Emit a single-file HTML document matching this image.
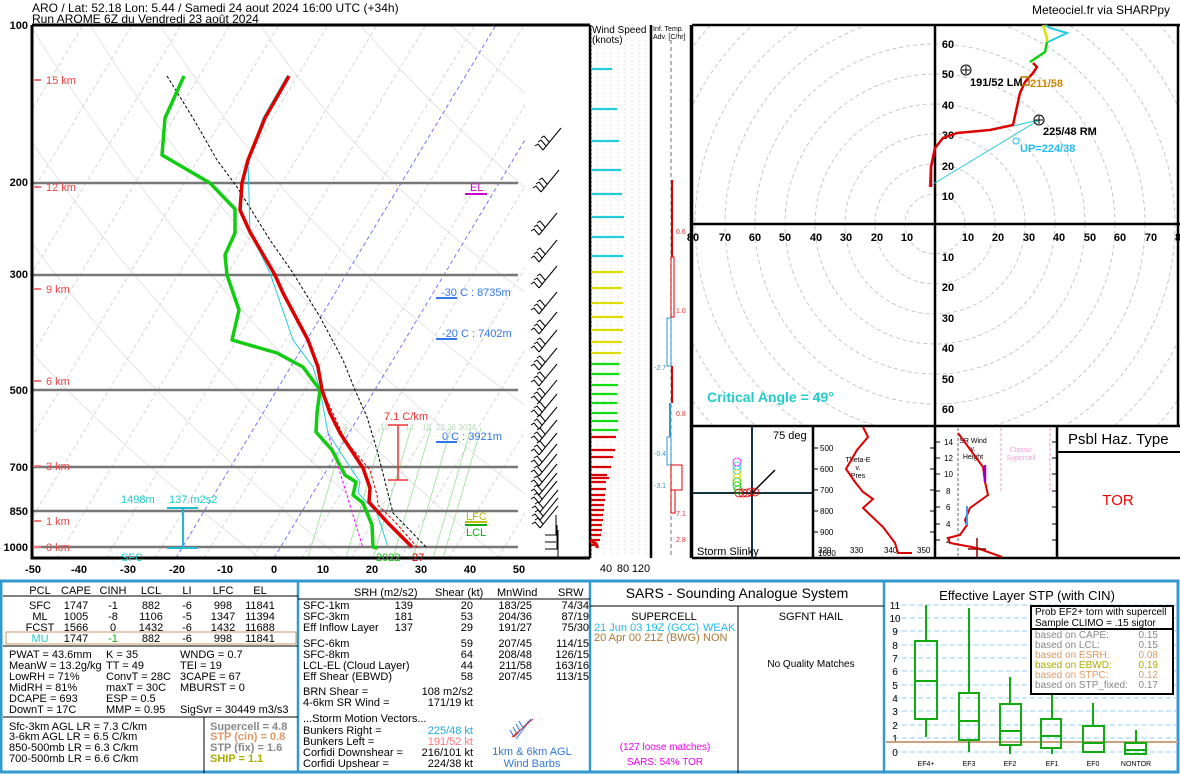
<!DOCTYPE html>
<html><head><meta charset="utf-8"><style>
html,body{margin:0;padding:0;background:#fff;width:1180px;height:774px;overflow:hidden}
svg{display:block;font-family:"Liberation Sans",sans-serif}
</style></head><body>
<svg width="1180" height="774" viewBox="0 0 1180 774" xmlns="http://www.w3.org/2000/svg">
<defs>
<clipPath id="sk"><rect x="33" y="26" width="556" height="531"/></clipPath>
<clipPath id="sk2"><rect x="33" y="26" width="492" height="531"/></clipPath>
<clipPath id="hd"><rect x="693" y="26" width="487" height="399"/></clipPath>
<g id="barb" fill="none" stroke="#000" stroke-width="1"><path d="M0,0 L18,-22 M0,0 L-5,-6 L-8,-4 M3,-4 L-2,-10 L-5,-8 M6,-8 L1,-14 L-2,-12"/></g>
<g id="barb2" fill="none" stroke="#000" stroke-width="1"><path d="M0,0 L18,-22 M0,0 L-5,-6 L-8,-4 M3,-4 L-2,-10 L-5,-8"/></g>
</defs>
<rect width="1180" height="774" fill="#fff"/>
<text x="32" y="12" font-size="12">ARO / Lat: 52.18 Lon: 5.44 / Samedi 24 aout 2024 16:00 UTC (+34h)</text>
<text x="32" y="23" font-size="12">Run AROME 6Z du Vendredi 23 août 2024</text>
<text x="1170" y="14" font-size="12" text-anchor="end">Meteociel.fr via SHARPpy</text>

<g clip-path="url(#sk2)">
 <g stroke="#ccc" stroke-width="0.8" stroke-dasharray="4,3">
  <path d="M-90,558 l320,-533 M-41,558 l320,-533 M8,558 l320,-533 M57,558 l320,-533 M106,558 l320,-533 M155,558 l320,-533 M204,558 l320,-533 M253,558 l320,-533 M302,558 l320,-533 M351,558 l320,-533 M400,558 l320,-533 M449,558 l320,-533 M498,558 l320,-533 M-139,558 l320,-533 M-188,558 l320,-533 M-237,558 l320,-533 M-286,558 l320,-533"/>
 </g>
 <g stroke="#ddd" stroke-width="0.8" fill="none">
  <path d="M560,430 Q300,250 160,25 M560,520 Q260,300 90,25 M500,558 Q220,330 30,25 M420,558 Q150,330 -10,80 M340,558 Q100,360 -10,180 M260,558 Q60,400 -10,300 M580,330 Q380,200 260,25 M590,240 Q460,140 360,25 M590,150 Q520,90 450,25"/>
 </g>
 <g stroke="#66f" stroke-width="0.9" stroke-dasharray="4,3">
  <path d="M176,558 l320,-533 M274,558 l320,-533"/>
 </g>
 <g stroke="#8d8" stroke-width="0.7">
  <path d="M308,558 l38,-130 M346,558 l38,-130 M373,558 l38,-130 M393,558 l38,-130 M413,558 l38,-130 M433,558 l38,-130 M443,558 l38,-130"/>
 </g>
 <g font-size="8" fill="#bdb"><text x="343" y="430">6</text><text x="380" y="430">10</text><text x="405" y="430">14</text><text x="422" y="430">18</text><text x="436" y="430">22 26 3034</text></g>
</g>
<g clip-path="url(#sk)">
 <g stroke="#777" stroke-width="2.5"><path d="M32,183 H518 M32,275 H518 M32,390 H518 M32,467 H518 M32,511 H518 M32,547 H518"/></g>
 <polyline fill="none" stroke="#000" stroke-width="1" stroke-dasharray="3,2" points="167,76 193,118 217,160 237,187 270,240 293,273 320,317 343,360 355,390 367,417 377,450 393,513 427,548"/>
 <polyline fill="none" stroke="#f0f" stroke-width="1" stroke-dasharray="3,2" points="328,433 363,548"/>
 <polyline fill="none" stroke="#2cd" stroke-width="1" points="287,76 263,118 248,160 250,232 270,273 293,340 313,367 320,390 328,433 350,467 360,482 358,493 377,513 388,547"/>
 <polyline fill="none" stroke="#d00" stroke-width="1" stroke-dasharray="3,2" points="322,390 333,413 345,440 370,470 377,495 378,505 395,522 418,548"/>
 <polyline fill="none" stroke="#1c1" stroke-width="3.5" stroke-linejoin="round" points="184,76 165,118 162,155 210,183 235,209 235,233 225,255 227,275 239,310 232,340 277,353 303,367 320,390 317,413 316,432 332,450 345,475 356,482 353,495 363,503 372,525 373,547 378,548"/>
 <polyline fill="none" stroke="#d00" stroke-width="3.5" stroke-linejoin="round" points="289,76 265,118 248,160 242,183 240,210 250,232 275,275 283,293 308,340 318,367 322,390 330,413 340,433 363,468 370,488 369,502 387,522 412,547"/>
</g>
<path d="M32,25 H590 M32,25 V558 H590" fill="none" stroke="#000" stroke-width="3"/>
<g font-size="11" font-weight="bold" text-anchor="end">
 <text x="28" y="29">100</text><text x="28" y="186">200</text><text x="28" y="278">300</text><text x="28" y="394">500</text><text x="28" y="471">700</text><text x="28" y="515">850</text><text x="28" y="551">1000</text>
</g>
<g font-size="11" font-weight="bold" text-anchor="middle">
 <text x="33" y="573">-50</text><text x="79" y="573">-40</text><text x="128" y="573">-30</text><text x="177" y="573">-20</text><text x="225" y="573">-10</text><text x="274" y="573">0</text><text x="323" y="573">10</text><text x="372" y="573">20</text><text x="421" y="573">30</text><text x="470" y="573">40</text><text x="519" y="573">50</text>
</g>
<g fill="#e44" font-size="11">
 <g stroke="#e77" stroke-width="2"><path d="M33,80 H41 M33,187 H41 M33,289 H41 M33,381 H41 M33,466 H41 M33,521 H41 M33,547 H41"/></g>
 <text x="46" y="84">15 km</text><text x="46" y="191">12 km</text><text x="46" y="293">9 km</text><text x="46" y="385">6 km</text><text x="46" y="470">3 km</text><text x="46" y="525">1 km</text><text x="46" y="551">0 km</text>
</g>
<text x="470" y="191" font-size="11" fill="#c0c">EL</text><path d="M465,194 H487" stroke="#c0c" stroke-width="2"/>
<g fill="#37e" font-size="11">
 <text x="441" y="296">-30 C : 8735m</text><path d="M436,298 H457" stroke="#37e" stroke-width="2"/>
 <text x="442" y="337">-20 C : 7402m</text><path d="M436,339 H457" stroke="#37e" stroke-width="2"/>
 <text x="442" y="440">0 C : 3921m</text><path d="M436,442 H457" stroke="#37e" stroke-width="2"/>
</g>
<text x="384" y="420" font-size="11" fill="#e33">7.1 C/km</text>
<path d="M388,425 H408 M398,425 V480 M388,480 H408" stroke="#e33" stroke-width="1.5" fill="none"/>
<text x="466" y="520" font-size="11" fill="#bb0">LFC</text><path d="M465,522 H487" stroke="#bb0" stroke-width="2"/>
<path d="M465,525 H487" stroke="#1a1" stroke-width="2"/><text x="466" y="536" font-size="11" fill="#1a1">LCL</text>
<g fill="#2cc" font-size="11"><text x="121" y="503">1498m</text><text x="169" y="503">137 m2s2</text><text x="121" y="561">SFC</text></g>
<path d="M167,508 H198 M183,508 V548 M167,548 H198" stroke="#2bc" stroke-width="2" fill="none"/>
<text x="376" y="561" font-size="11" fill="#1c1">2022</text><text x="412" y="561" font-size="11" fill="#d00">27</text>
<g>
<use href="#barb" x="543" y="150"/><use href="#barb" x="541" y="192"/><use href="#barb" x="539" y="235"/><use href="#barb" x="539" y="262"/><use href="#barb" x="539" y="288"/><use href="#barb" x="539" y="314"/><use href="#barb" x="539" y="334"/><use href="#barb" x="539" y="352"/><use href="#barb" x="539" y="370"/><use href="#barb" x="539" y="386"/><use href="#barb" x="539" y="402"/><use href="#barb" x="539" y="416"/><use href="#barb" x="539" y="429"/><use href="#barb" x="539" y="442"/><use href="#barb" x="539" y="455"/><use href="#barb2" x="539" y="466"/><use href="#barb2" x="539" y="476"/><use href="#barb2" x="539" y="486"/><use href="#barb2" x="539" y="495"/><use href="#barb2" x="539" y="503"/><use href="#barb2" x="540" y="512"/><use href="#barb2" x="540" y="520"/><use href="#barb2" x="540" y="528"/>
<path d="M545,535 H556 V515 M545,542 H556 M545,549 H557 V525 M548,557 H558 V530" stroke="#000" fill="none"/>
</g>

<path d="M590,25 V558 M651,25 V558" stroke="#000" stroke-width="2.5"/>
<g stroke="#f4d6d6" stroke-width="0.8" stroke-dasharray="2,2"><path d="M597,40 V556 M604,40 V556 M611,40 V556 M618,40 V556 M625,40 V556 M632,40 V556 M639,40 V556 M646,40 V556"/></g>
<path d="M591,25 V558" stroke="#000" stroke-dasharray="2,2"/>
<text x="592" y="33" font-size="10">Wind Speed</text><text x="592" y="43" font-size="10">(knots)</text>
<g stroke-width="2.2">
 <g stroke="#2cd"><path d="M591,69 H612 M591,109 H617 M591,141 H619 M591,170 H621 M591,194 H622 M591,217 H624 M591,237 H624 M591,256 H623"/></g>
 <g stroke="#dd0"><path d="M591,272 H623 M591,288 H622 M591,303 H623 M591,317 H623 M591,330 H623 M591,342 H622 M591,353 H621"/></g>
 <g stroke="#1d1"><path d="M591,364 H619 M591,374 H619 M591,385 H618 M591,394 H617 M591,403 H617 M591,413 H617 M591,421 H618 M591,430 H618"/></g>
 <g stroke="#d00"><path d="M591,437 H616 M591,450 H615 M591,457 H613 M591,467 H611 M591,478 H609 M591,475 H607 M591,482 H606 M591,489 H606 M591,495 H605 M591,500 H605 M591,505 H604 M591,510 H604 M591,515 H603 M591,520 H603 M591,525 H602 M591,530 H602 M591,535 H601 M591,540 H600 M591,545 H598"/></g>
</g>
<path d="M590,541 Q598,543 597,548" stroke="#d00" stroke-width="3" fill="none"/>
<g font-size="11" text-anchor="middle"><text x="606" y="572">40</text><text x="623" y="572">80</text><text x="641" y="572">120</text></g>

<path d="M691,25 V558" stroke="#000" stroke-width="2.5"/>
<path d="M671,40 V558" stroke="#888" stroke-width="1.2" stroke-dasharray="4,3"/>
<text x="653" y="31" font-size="7">Inf. Temp.</text><text x="653" y="39" font-size="7">Adv. [C/hr]</text>
<g font-size="7">
 <rect x="671" y="180" width="2" height="77" fill="#d00"/><text x="676" y="234" fill="#e33">0.6</text>
 <rect x="671" y="257" width="3" height="60" fill="none" stroke="#d00"/><text x="676" y="313" fill="#e33">1.0</text>
 <rect x="667" y="318" width="4" height="48" fill="none" stroke="#39c"/><text x="654" y="370" fill="#39c">-2.7</text>
 <rect x="671" y="366" width="2" height="37" fill="#d00"/><text x="676" y="416" fill="#e33">0.8</text>
 <rect x="669" y="403" width="2" height="34" fill="#39c"/><text x="654" y="456" fill="#39c">-0.4</text>
 <rect x="667" y="437" width="4" height="28" fill="none" stroke="#39c"/><text x="654" y="488" fill="#39c">-3.1</text>
 <rect x="671" y="465" width="11" height="25" fill="none" stroke="#d00"/><text x="676" y="516" fill="#e33">7.1</text>
 <rect x="671" y="490" width="4" height="23" fill="none" stroke="#d00"/><text x="676" y="542" fill="#e33">2.8</text>
</g>

<g clip-path="url(#hd)" fill="none" stroke="#bbb" stroke-width="0.8" stroke-dasharray="4,3">
 <circle cx="935" cy="224" r="30"/><circle cx="935" cy="224" r="60"/><circle cx="935" cy="224" r="90"/><circle cx="935" cy="224" r="120"/><circle cx="935" cy="224" r="150"/><circle cx="935" cy="224" r="180"/><circle cx="935" cy="224" r="210"/><circle cx="935" cy="224" r="240"/><circle cx="935" cy="224" r="270"/><circle cx="935" cy="224" r="300"/>
</g>
<path d="M692,25 H1180 M692,224 H1180 M935,25 V426 M1178,25 V426" stroke="#000" stroke-width="2.5" fill="none"/>
<g font-size="11" font-weight="bold" text-anchor="middle">
 <text x="693" y="241">80</text><text x="725" y="241">70</text><text x="755" y="241">60</text><text x="785" y="241">50</text><text x="816" y="241">40</text><text x="846" y="241">30</text><text x="877" y="241">20</text><text x="907" y="241">10</text>
 <text x="968" y="241">10</text><text x="998" y="241">20</text><text x="1029" y="241">30</text><text x="1059" y="241">40</text><text x="1090" y="241">50</text><text x="1120" y="241">60</text><text x="1151" y="241">70</text><text x="1178" y="241">8</text>
 <text x="948" y="48">60</text><text x="948" y="78">50</text><text x="948" y="109">40</text><text x="948" y="139">30</text><text x="948" y="170">20</text><text x="948" y="200">10</text>
 <text x="948" y="261">10</text><text x="948" y="291">20</text><text x="948" y="322">30</text><text x="948" y="352">40</text><text x="948" y="383">50</text><text x="948" y="413">60</text>
</g>
<path d="M930,186 L1039,120 L1013,126" stroke="#2cd" stroke-width="1" fill="none"/>
<polyline fill="none" stroke="#e0e" stroke-width="2.5" points="930,187 931,167 935,148"/>
<polyline fill="none" stroke="#d00" stroke-width="2.5" stroke-linejoin="round" points="931,187 931,167 935,148 943,138 957,133 990,130 1013,125 1020,93 1025,82 1033,73 1037,67 1033,63"/>
<polyline fill="none" stroke="#1c1" stroke-width="2.5" points="1030,62 1045,52 1047,42"/>
<polyline fill="none" stroke="#dd0" stroke-width="2.5" points="1047,42 1047,38 1043,25"/>
<polyline fill="none" stroke="#2cd" stroke-width="2" points="1045,25 1050,28 1067,33 1048,42"/>
<circle cx="1039" cy="120" r="5" fill="none" stroke="#000"/><path d="M1035,120 H1043 M1039,116 V124" stroke="#000"/>
<circle cx="966" cy="70" r="5" fill="none" stroke="#000"/><path d="M962,70 H970 M966,66 V74" stroke="#000"/>
<rect x="1021" y="77" width="8" height="8" fill="none" stroke="#b70" stroke-width="1.5"/>
<circle cx="1016" cy="141" r="3" fill="none" stroke="#2be"/>
<text x="970" y="86" font-size="11" font-weight="bold">191/52 LM</text>
<text x="1030" y="87" font-size="11" font-weight="bold" fill="#c80">211/58</text>
<text x="1043" y="135" font-size="11" font-weight="bold">225/48 RM</text>
<text x="1020" y="152" font-size="11" font-weight="bold" fill="#2be">UP=224/38</text>
<text x="707" y="402" font-size="14" font-weight="bold" fill="#2cc">Critical Angle = 49°</text>

<path d="M692,426 H1180 M692,558 H1180 M813,426 V558 M935,426 V558 M1057,426 V558 M692,25 V558" stroke="#000" stroke-width="2.5" fill="none"/>
<path d="M752,427 V558 M693,493 H812" stroke="#134" stroke-width="2"/>
<text x="773" y="439" font-size="11">75 deg</text>
<path d="M752,493 L775,470" stroke="#000" stroke-width="1.5"/>
<g fill="none" stroke-width="0.8">
 <circle cx="737" cy="462" r="4" stroke="#f0f"/><circle cx="737" cy="466" r="4" stroke="#2cd"/><circle cx="737" cy="470" r="4" stroke="#2cd"/><circle cx="737" cy="474" r="4" stroke="#dd0"/><circle cx="737" cy="478" r="4" stroke="#dd0"/><circle cx="737" cy="482" r="4" stroke="#1c1"/><circle cx="737" cy="486" r="4" stroke="#1c1"/><circle cx="738" cy="490" r="4" stroke="#1c1"/>
 <circle cx="739" cy="493" r="4" stroke="#d00"/><circle cx="743" cy="493" r="4" stroke="#d00"/><circle cx="747" cy="493" r="4" stroke="#d00"/><circle cx="751" cy="492" r="4" stroke="#d00"/><circle cx="755" cy="492" r="4" stroke="#d00"/>
</g>
<text x="697" y="555" font-size="11">Storm Slinky</text>
<g font-size="8" fill="#000"><text x="820" y="451">500</text><text x="820" y="472">600</text><text x="820" y="493">700</text><text x="820" y="514">800</text><text x="820" y="535">900</text><text x="818" y="556">1000</text>
<text x="818" y="553">320</text><text x="850" y="553">330</text><text x="884" y="553">340</text><text x="917" y="553">350</text></g>
<g stroke="#000"><path d="M814,448 H818 M814,469 H818 M814,490 H818 M814,511 H818 M814,532 H818 M930,448 H935 M930,469 H935 M930,490 H935 M930,511 H935 M930,532 H935"/></g>
<text x="858" y="462" font-size="7" text-anchor="middle">Theta-E</text><text x="858" y="470" font-size="7" text-anchor="middle">v.</text><text x="858" y="478" font-size="7" text-anchor="middle">Pres</text>
<polyline fill="none" stroke="#d00" stroke-width="2" points="863,427 868,437 857,450 846,469 855,482 863,492 873,499 863,508 883,527 895,543 898,553 912,553"/>
<g font-size="8"><text x="944" y="445">14</text><text x="944" y="461">12</text><text x="944" y="477">10</text><text x="946" y="494">8</text><text x="946" y="510">6</text><text x="946" y="527">4</text><text x="946" y="543">2</text></g>
<g stroke="#000"><path d="M936,442 H940 M936,458 H940 M936,474 H940 M936,491 H940 M936,507 H940 M936,524 H940 M936,540 H940 M1052,442 H1056 M1052,458 H1056 M1052,474 H1056 M1052,491 H1056 M1052,507 H1056 M1052,524 H1056 M1052,540 H1056"/></g>
<path d="M958,428 V558" stroke="#666" stroke-dasharray="3,2"/>
<path d="M1001,428 V491 M1050,428 V491" stroke="#fbd" stroke-width="1.5" stroke-dasharray="3,2"/>
<text x="1021" y="452" font-size="7" fill="#f9d" text-anchor="middle">Classic</text><text x="1021" y="460" font-size="7" fill="#f9d" text-anchor="middle">Supercell</text>
<text x="973" y="443" font-size="7" text-anchor="middle">SR Wind</text><text x="973" y="451" font-size="7" text-anchor="middle">v.</text><text x="973" y="459" font-size="7" text-anchor="middle">Height</text>
<polyline fill="none" stroke="#d00" stroke-width="2" points="958,433 983,467 985,482 988,495 970,508 965,520 967,525 960,535 948,538 950,543 977,548 1002,557"/>
<path d="M985,465 V482" stroke="#90c" stroke-width="2.5"/><path d="M967,506 V525" stroke="#49e" stroke-width="2"/><path d="M977,538 V557 M968,549 H986" stroke="#900" stroke-width="1.5"/>
<text x="1068" y="444" font-size="15">Psbl Haz. Type</text>
<path d="M1057,452 H1180" stroke="#000" stroke-width="2"/>
<text x="1118" y="505" font-size="15" fill="#e00" text-anchor="middle">TOR</text>

<rect x="1" y="581" width="1177" height="191" fill="none" stroke="#39c" stroke-width="3"/>
<path d="M298,581 V773 M590,581 V773 M884,581 V773" stroke="#39c" stroke-width="2.5"/>
<g font-size="11">
 <g text-anchor="middle">
  <text x="40" y="594">PCL</text><text x="76" y="594">CAPE</text><text x="113" y="594">CINH</text><text x="151" y="594">LCL</text><text x="187" y="594">LI</text><text x="223" y="594">LFC</text><text x="260" y="594">EL</text>
  <text x="40" y="609">SFC</text><text x="76" y="609">1747</text><text x="113" y="609">-1</text><text x="151" y="609">882</text><text x="187" y="609">-6</text><text x="223" y="609">998</text><text x="260" y="609">11841</text>
  <text x="40" y="620">ML</text><text x="76" y="620">1005</text><text x="113" y="620">-8</text><text x="151" y="620">1106</text><text x="187" y="620">-5</text><text x="223" y="620">1347</text><text x="260" y="620">11394</text>
  <text x="40" y="631">FCST</text><text x="76" y="631">1566</text><text x="113" y="631">0</text><text x="151" y="631">1432</text><text x="187" y="631">-6</text><text x="223" y="631">1432</text><text x="260" y="631">11688</text>
  <text x="40" y="642" fill="#2cc">MU</text><text x="76" y="642">1747</text><text x="113" y="642" fill="#1a1">-1</text><text x="151" y="642">882</text><text x="187" y="642">-6</text><text x="223" y="642">998</text><text x="260" y="642">11841</text>
 </g>
 <path d="M3,596 H298" stroke="#000"/>
 <rect x="6" y="632" width="290" height="12" fill="none" stroke="#c96"/>
 <path d="M3,646 H298 M3,717 H298 M204,717 V773" stroke="#000"/>
 <text x="9" y="658">PWAT = 43.6mm</text><text x="106" y="658">K = 35</text><text x="180" y="658">WNDG = 0.7</text>
 <text x="9" y="669">MeanW = 13.2g/kg</text><text x="106" y="669">TT = 49</text><text x="180" y="669">TEI = 19</text>
 <text x="9" y="680">LowRH = 71%</text><text x="106" y="680">ConvT = 28C</text><text x="180" y="680">3CAPE = 67</text>
 <text x="9" y="691">MidRH = 81%</text><text x="106" y="691">maxT = 30C</text><text x="180" y="691">MBURST = 0</text>
 <text x="9" y="702">DCAPE = 693</text><text x="106" y="702">ESP = 0.5</text>
 <text x="9" y="713">DownT = 17C</text><text x="106" y="713">MMP = 0.95</text><text x="180" y="713">SigSvr = 30449 m3/s3</text>
 <text x="9" y="730">Sfc-3km AGL LR = 7.3 C/km</text>
 <text x="9" y="740">3-6km AGL LR = 6.5 C/km</text>
 <text x="9" y="751">850-500mb LR = 6.3 C/km</text>
 <text x="9" y="762">700-500mb LR = 6.6 C/km</text>
 <g font-weight="bold"><text x="210" y="730" fill="#888">Supercell = 4.8</text><text x="210" y="740" fill="#d96">STP (cin) = 0.8</text><text x="210" y="751" fill="#888">STP (fix) = 1.6</text><text x="210" y="762" fill="#aa0">SHIP = 1.1</text></g>

 <text x="354" y="596">SRH (m2/s2)</text><text x="435" y="596">Shear (kt)</text><text x="497" y="596">MnWind</text><text x="558" y="596">SRW</text>
 <path d="M298,599 H590" stroke="#000"/>
 <g><text x="303" y="609">SFC-1km</text><text x="303" y="620">SFC-3km</text><text x="303" y="631">Eff Inflow Layer</text>
 <text x="303" y="647">SFC-6km</text><text x="303" y="658">SFC-8km</text><text x="303" y="669">LCL-EL (Cloud Layer)</text><text x="303" y="680">Eff Shear (EBWD)</text>
 <text x="303" y="695">BRN Shear =</text><text x="303" y="706">4-6km SR Wind =</text>
 <text x="303" y="722">...Storm Motion Vectors...</text><text x="303" y="734">Bunkers Right =</text><text x="303" y="745">Bunkers Left =</text><text x="303" y="756">Corfidi Downshear =</text><text x="303" y="767">Corfidi Upshear =</text></g>
 <g text-anchor="end">
  <text x="413" y="609">139</text><text x="413" y="620">181</text><text x="413" y="631">137</text>
  <text x="473" y="609">20</text><text x="473" y="620">53</text><text x="473" y="631">29</text><text x="473" y="647">59</text><text x="473" y="658">64</text><text x="473" y="669">44</text><text x="473" y="680">58</text>
  <text x="532" y="609">183/25</text><text x="532" y="620">204/36</text><text x="532" y="631">191/27</text><text x="532" y="647">207/45</text><text x="532" y="658">208/48</text><text x="532" y="669">211/58</text><text x="532" y="680">207/45</text>
  <text x="589" y="609">74/34</text><text x="589" y="620">87/19</text><text x="589" y="631">75/30</text><text x="589" y="647">114/15</text><text x="589" y="658">126/15</text><text x="589" y="669">163/16</text><text x="589" y="680">113/15</text>
  <text x="473" y="695">108 m2/s2</text><text x="473" y="706">171/19 kt</text>
  <text x="473" y="734" fill="#2ad">225/48 kt</text><text x="473" y="745" fill="#f77">191/52 kt</text><text x="473" y="756">216/101 kt</text><text x="473" y="767">224/38 kt</text>
 </g>
 <path d="M514,737 L531,719 M516,739 L531,719 M510,730 L514,737 M513,727 L517,734 M516,724 L520,731 M519,721 L523,728" stroke="#37d" stroke-width="1" fill="none"/>
 <path d="M512,737 L533,719 M514,737 L518,733" stroke="#d33" stroke-width="1" fill="none"/>
 <text x="532" y="755" fill="#37d" text-anchor="middle">1km &amp; 6km AGL</text><text x="532" y="767" fill="#37d" text-anchor="middle">Wind Barbs</text>

 <text x="737" y="598" font-size="14" text-anchor="middle">SARS - Sounding Analogue System</text>
 <path d="M590,606 H884 M738,606 V773" stroke="#000"/>
 <text x="664" y="620" text-anchor="middle">SUPERCELL</text><text x="811" y="620" text-anchor="middle">SGFNT HAIL</text>
 <text x="594" y="631" fill="#2be">21 Jun 03 19Z (GCC)</text><text x="703" y="631" fill="#2be">WEAK</text>
 <text x="594" y="641" fill="#a73">20 Apr 00 21Z (BWG)</text><text x="703" y="641" fill="#a73">NON</text>
 <text x="811" y="667" font-size="10" text-anchor="middle">No Quality Matches</text>
 <text x="665" y="750" font-size="10" fill="#e0e" text-anchor="middle">(127 loose matches)</text>
 <text x="665" y="765" font-size="10" fill="#e0e" text-anchor="middle">SARS: 54% TOR</text>

 <text x="1027" y="600" font-size="13" text-anchor="middle">Effective Layer STP (with CIN)</text>
 <g stroke="#acd8f5" stroke-width="1.2" stroke-dasharray="5,3"><path d="M894,605 H1176 M894,618 H1176 M894,631 H1176 M894,645 H1176 M894,658 H1176 M894,671 H1176 M894,685 H1176 M894,698 H1176 M894,711 H1176 M894,725 H1176 M894,738 H1176 M894,752 H1176"/></g>
 <g font-size="10" text-anchor="middle"><text x="895" y="609">11</text><text x="895" y="622">10</text><text x="895" y="635">9</text><text x="895" y="649">8</text><text x="895" y="662">7</text><text x="895" y="675">6</text><text x="895" y="689">5</text><text x="895" y="702">4</text><text x="895" y="715">3</text><text x="895" y="729">2</text><text x="895" y="742">1</text><text x="895" y="756">0</text></g>
 <path d="M886,742 H1178" stroke="#c9a080" stroke-width="2"/>
 <g fill="none" stroke="#1a1" stroke-width="2">
  <path d="M926,605 V641 M926,719 V737"/><rect x="915" y="641" width="22" height="78"/><path d="M915,681 H937"/>
  <path d="M969,608 V693 M969,740 V752"/><rect x="959" y="693" width="20" height="47"/><path d="M959,721 H979"/>
  <path d="M1010,677 V704 M1010,745 V754"/><rect x="1000" y="704" width="21" height="41"/><path d="M1000,731 H1021"/>
  <path d="M1052,694 V719 M1052,748 V754"/><rect x="1041" y="719" width="20" height="29"/><path d="M1041,736 H1061"/>
  <path d="M1093,703 V726"/><rect x="1083" y="726" width="21" height="26"/><path d="M1083,743 H1104"/>
  <path d="M1136,730 V743"/><rect x="1125" y="743" width="21" height="11"/><path d="M1125,750 H1146"/>
 </g>
 <g font-size="7" text-anchor="middle"><text x="926" y="766">EF4+</text><text x="969" y="766">EF3</text><text x="1010" y="766">EF2</text><text x="1052" y="766">EF1</text><text x="1093" y="766">EF0</text><text x="1136" y="766">NONTOR</text></g>
 <rect x="1031" y="606" width="142" height="88" fill="#fff" stroke="#000" stroke-width="2"/>
 <path d="M1031,629 H1173" stroke="#000" stroke-width="2"/>
 <g font-size="10">
  <text x="1035" y="615">Prob EF2+ torn with supercell</text><text x="1035" y="626">Sample CLIMO = .15 sigtor</text>
  <text x="1035" y="638" fill="#888">based on CAPE:</text><text x="1158" y="638" fill="#888" text-anchor="end">0.15</text>
  <text x="1035" y="648" fill="#888">based on LCL:</text><text x="1158" y="648" fill="#888" text-anchor="end">0.15</text>
  <text x="1035" y="658" fill="#d96">based on ESRH:</text><text x="1158" y="658" fill="#d96" text-anchor="end">0.08</text>
  <text x="1035" y="668" fill="#aa0">based on EBWD:</text><text x="1158" y="668" fill="#aa0" text-anchor="end">0.19</text>
  <text x="1035" y="678" fill="#d96">based on STPC:</text><text x="1158" y="678" fill="#d96" text-anchor="end">0.12</text>
  <text x="1035" y="688" fill="#888">based on STP_fixed:</text><text x="1158" y="688" fill="#888" text-anchor="end">0.17</text>
 </g>
</g>
</svg>
</body></html>
